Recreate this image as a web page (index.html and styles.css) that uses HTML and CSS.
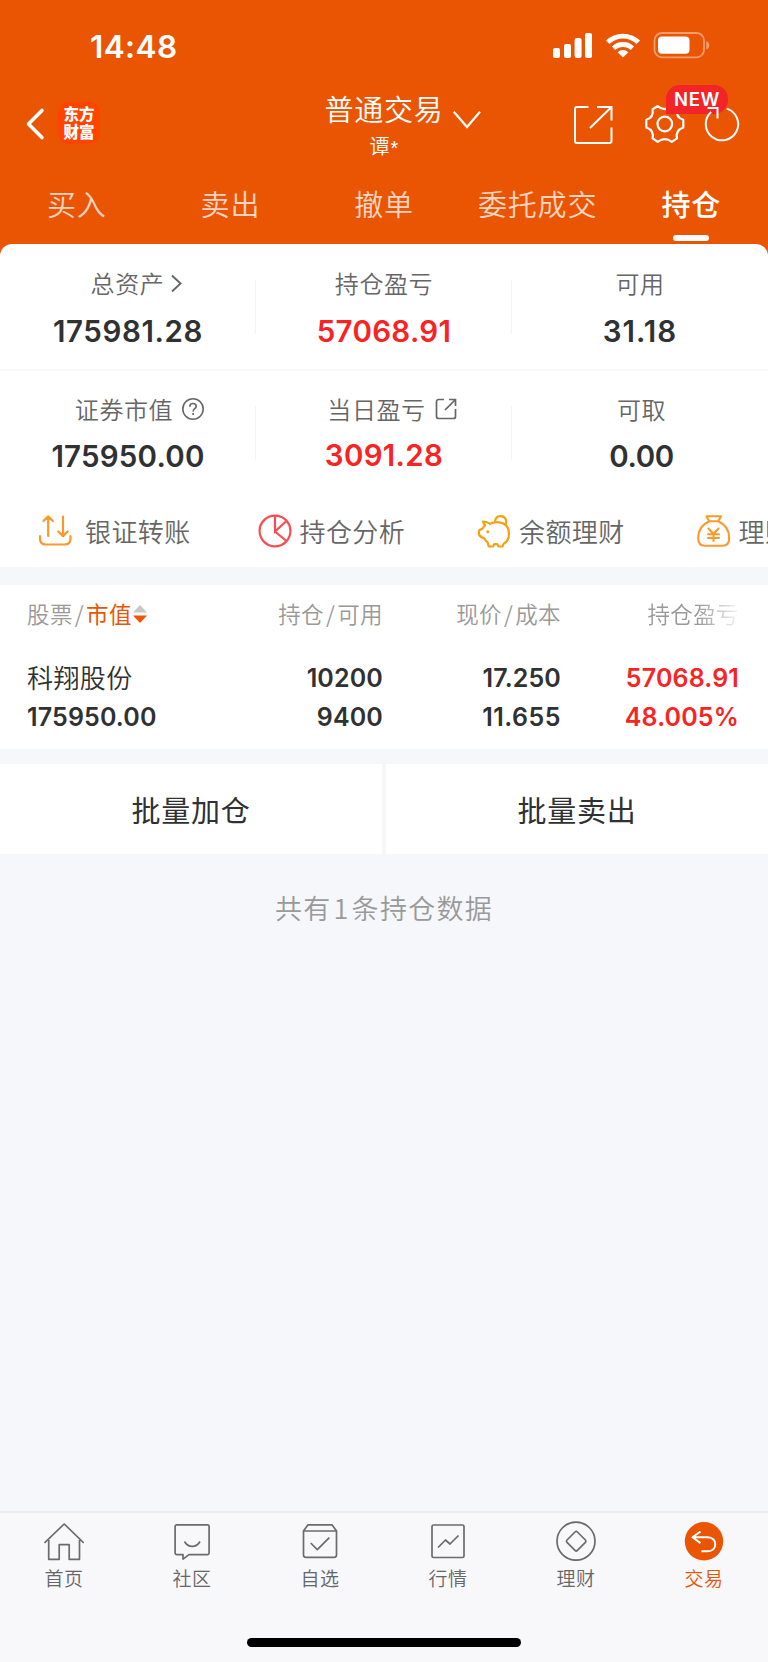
FILE: index.html
```html
<!DOCTYPE html>
<html lang="zh-CN">
<head>
<meta charset="utf-8">
<title>持仓</title>
<link rel="stylesheet" href="styles.css">
</head>
<body>
<div class="app">
  <header class="header">
    <div class="status">
      <span class="time">14:48</span>
      <svg class="status-icons" width="158" height="28" viewBox="552 32 158 28" fill="#fff">
        <rect x="553" y="48" width="7" height="10" rx="2"/><rect x="564" y="44" width="7" height="14" rx="2"/><rect x="574.6" y="38" width="7" height="20" rx="2"/><rect x="585" y="33" width="7" height="25" rx="2"/>
        <path d="M606 40.6a24.500 24.500 0 0 1 34 0l-3.400 3.500a19.600 19.600 0 0 0-27.200 0z"/>
        <path d="M611.900 46.600a16 16 0 0 1 22.200 0l-3.300 3.400a11.300 11.300 0 0 0-15.600 0z"/>
        <path d="M617.600 52.200a8 8 0 0 1 10.800 0l-5.400 5.400z"/>
        <rect x="654.500" y="33" width="49.500" height="24.300" rx="7.500" fill="none" stroke="#fff" stroke-opacity=".42" stroke-width="1.800"/>
        <rect x="658" y="36.600" width="31.500" height="17.200" rx="4"/>
        <path d="M706.300 41v8.500c1.900-.8 3-2.400 3-4.250s-1.100-3.450-3-4.250z" fill-opacity=".45"/>
      </svg>
    </div>
    <div class="nav">
      <div class="nav-left">
        <svg width="20" height="34" viewBox="25 107 20 34" fill="none" stroke="#fff" stroke-width="3.600" stroke-linecap="round" stroke-linejoin="round"><path d="M42 110.500 28.500 124 42 137.500"/></svg>
        <div class="logo">东方<br>财富</div>
      </div>
      <div class="account">
        <div class="account-name">普通交易</div>
        <div class="account-user">谭<span>*</span></div>
      </div>
      <svg class="account-arrow" width="30" height="20" viewBox="452 110 30 20" fill="none" stroke="#fff" stroke-width="2.200"><path d="M453.800 111.800 467 127l13-15.200"/></svg>
      <div class="actions">
        <svg width="40" height="40" viewBox="573 105 40 40" fill="none" stroke="#fff" stroke-width="2"><path d="M588.500 107H577a2 2 0 0 0-2 2v32a2 2 0 0 0 2 2h32.500a2 2 0 0 0 2-2v-13.500M597 107h14.500v13.500M611.500 107 590 128"/></svg>
        <div class="gear">
          <svg width="42" height="42" viewBox="644 103 42 42" fill="none" stroke="#fff" stroke-width="2.200" stroke-linejoin="round"><circle cx="664.800" cy="124" r="7.300"/><path d="M657.500 106.200Q664.800 112 672.100 106.200L677 109.300Q675.600 117.500 683.300 119.800L683.300 127.500Q675.200 130.500 677 138.300L671.800 141.800Q664.800 136.500 657.800 141.800L652.600 138.300Q654.400 130.500 646.300 127.500L646.300 119.800Q654 117.500 652.600 109.300Z"/></svg>
          <span class="badge">NEW</span>
        </div>
        <svg class="refresh" width="36" height="38" viewBox="703 105 36 38" fill="none" stroke="#fff" stroke-width="2"><path d="M725.700 108.600a16.200 16.200 0 1 1-15.600 3.500M706.500 108h10v10.500"/></svg>
      </div>
    </div>
    <nav class="tabs">
      <span>买入</span><span>卖出</span><span>撤单</span><span>委托成交</span><span class="on">持仓</span>
    </nav>
  </header>

  <main class="main">
    <section class="card">
      <div class="stats">
        <div class="stat">
          <div class="label shift-1">总资产<svg class="i-more" width="12" height="20" viewBox="170 274 12 20" fill="none" stroke="#666" stroke-width="1.900"><path d="M172 276.500l8.500 8-8.500 8"/></svg></div>
          <div class="value v1">175981.28</div>
        </div>
        <div class="stat"><div class="label">持仓盈亏</div><div class="value red v2">57068.91</div></div>
        <div class="stat"><div class="label">可用</div><div class="value v3">31.18</div></div>
      </div>
      <div class="stats second">
        <div class="stat">
          <div class="label shift-2">证券市值<svg class="i-help" width="24" height="24" viewBox="0 0 24 24" fill="none" stroke="#666" stroke-width="1.600"><circle cx="12" cy="12" r="10.200"/><path d="M8.800 9.700c0-2 1.300-3.200 3.200-3.200s3.200 1.200 3.200 2.900c0 2.200-3.100 2.500-3.100 5M12.100 16v2"/></svg></div>
          <div class="value v4">175950.00</div>
        </div>
        <div class="stat">
          <div class="label shift-3">当日盈亏<svg class="i-link" width="22" height="22" viewBox="0 0 22 22" fill="none" stroke="#666" stroke-width="1.700"><path d="M9 1.500H3.500a2 2 0 0 0-2 2v15a2 2 0 0 0 2 2h15a2 2 0 0 0 2-2V11M14 1.500h6.500V8M20.500 1.500 10 12"/></svg></div>
          <div class="value red v5">3091.28</div>
        </div>
        <div class="stat nudge"><div class="label">可取</div><div class="value v6">0.00</div></div>
      </div>
      <div class="links">
        <div class="link wide"><svg width="34" height="34" viewBox="38 514 34 34" fill="none" stroke="#f7992c" stroke-width="2.200" stroke-linecap="round" stroke-linejoin="round"><path d="M40 536v2.500q0 6 6 6h18.500q6 0 6-6V536M48.200 536v-19.500M43.500 521l4.700-4.600 4.700 4.600M63 516.500V536M58.300 531.500l4.700 4.600 4.700-4.600"/></svg>银证转账</div>
        <div class="link"><svg width="34" height="34" viewBox="257.500 514 34 34" fill="none" stroke="#fb4b52" stroke-width="2.200"><circle cx="274.500" cy="531" r="15.400"/><path d="M274.500 515.500v16l12-11M274.500 531.500l12 10"/></svg>持仓分析</div>
        <div class="link"><svg width="34" height="34" viewBox="477 514 34 34" fill="none" stroke="#f9a00f" stroke-width="2.200" stroke-linejoin="round"><path d="M483 521.500c3.400 0 5.500 1.200 7 2.400 3-1.900 6-1.900 9-1.500 7 .8 10 5 10 11 0 4.800-2 8.500-5.500 10.500l-1 2.600h-4l-1.200-2.300h-3l-1.200 2.300h-4.400l-1-4c-1.700-1.200-2.700-2.600-3.500-4.300-2.500-.6-4.500-2-5.200-3.700V530.500l3.500-2c.8-1.200 1.500-2.200 2.500-3zM495 521.500c.5-3.500 3-5.500 6-5.300 4.300.3 6.500 4.300 4.600 8.300"/><circle cx="487.800" cy="531.700" r="1.500" fill="#f9a00f" stroke="none"/></svg>余额理财</div>
        <div class="link"><svg width="34" height="34" viewBox="696.500 514 34 34" fill="none" stroke="#fa9a2d" stroke-width="2.100" stroke-linecap="round" stroke-linejoin="round"><path d="M706 516.200h14.500l-2.800 5q11 5 11 16.500 0 8-6.500 8h-18q-6.500 0-6.500-8 0-11.500 11-16.500zM708.700 521.200h9M708 528.500l5 5.500 5-5.500M713 534v7M707.500 534.300h11M707.500 538h11"/></svg>理财</div>
      </div>
    </section>

    <section class="holdings">
      <div class="row head">
        <span class="c1">股票<i>/</i><b>市值</b><svg width="14" height="20" viewBox="0 0 14 20"><path d="M0 8.500 7 1l7 7.500z" fill="#c8c8c8"/><path d="M0 11.500h14L7 19z" fill="#f05508"/></svg></span>
        <span class="c2">持仓<i>/</i>可用</span><span class="c3">现价<i>/</i>成本</span><span class="c4 fade">持仓盈亏</span>
      </div>
      <div class="row top"><span class="c1 name">科翔股份</span><span class="c2">10200</span><span class="c3">17.250</span><span class="c4 red">57068.91</span></div>
      <div class="row"><span class="c1">175950.00</span><span class="c2">9400</span><span class="c3 ones">11.655</span><span class="c4 red">48.005%</span></div>
    </section>

    <div class="batch"><button>批量加仓</button><button>批量卖出</button></div>
    <p class="summary">共有<i>1</i>条持仓数据</p>
  </main>

  <footer class="dock">
    <div class="dock-items">
      <div class="dock-item"><svg viewBox="44 1521 40 40"><path d="M44.500 1543 64.200 1524l19.600 19M48.700 1540v19.300h10.500v-14.600h10v14.600h10.300V1540"/></svg>首页</div>
      <div class="dock-item"><svg viewBox="172 1521 40 40"><path d="M176.500 1524.800h31a1.600 1.600 0 0 1 1.600 1.600v26.600a1.600 1.600 0 0 1-1.600 1.600H189l-6 4.500v-4.500h-6.300a1.600 1.600 0 0 1-1.600-1.600v-26.600a1.600 1.600 0 0 1 1.400-1.600zM184.500 1541.500c3.500 6.500 12 6.500 15.500 0"/></svg>社区</div>
      <div class="dock-item"><svg viewBox="300 1521 40 40"><path d="M303.500 1531l4.500-6.200h24l4.500 6.200v24a2.300 2.300 0 0 1-2.300 2.300h-28.400a2.300 2.300 0 0 1-2.300-2.300zM303.500 1531h33M310.700 1543l6.600 6.600 12-12"/></svg>自选</div>
      <div class="dock-item"><svg viewBox="428 1521 40 40"><rect x="432" y="1525" width="32" height="32.500" rx="1.500"/><path d="M438 1547.500l7.500-7.500 4.500 4 8.500-8.500"/></svg>行情</div>
      <div class="dock-item"><svg viewBox="556 1521 40 40"><circle cx="576" cy="1541.200" r="19"/><path d="M575 1532l-8 8q-1.200 1.200 0 2.400l8 8q1.200 1.200 2.400 0l8-8q1.200-1.200 0-2.400l-8-8q-1.200-1.200-2.400 0z"/></svg>理财</div>
      <div class="dock-item active"><svg viewBox="684 1521 40 40"><circle cx="704" cy="1541.300" r="19.200"/><path d="M700.500 1531.500l-8 5.800 8 5.800M693 1537.300h14.800c10 0 10 14 0 14h-6.500"/></svg>交易</div>
    </div>
    <div class="home-bar"></div>
  </footer>
</div>
</body>
</html>
```
FILE: styles.css
```css
* { box-sizing: border-box; }
body { margin: 0; background: #f6f7fa; font-family: "Noto Sans CJK SC", sans-serif; color: #303132; font-weight: 350; }
i { font-style: normal; }
svg { flex: none; display: block; }
.app { width: 768px; height: 1662px; display: flex; flex-direction: column; overflow: hidden; }

.header { height: 256px; background: #ea5504; color: #fff; }
.status { height: 88px; padding: 4px 58px 0 90px; display: flex; align-items: center; justify-content: space-between; }
.time { font: 600 31.500px/40px Inter, sans-serif; letter-spacing: 0.4px; padding-top: 1px; }
.nav { height: 78px; padding: 0 28px 0 25px; display: flex; }
.nav-left { width: 299px; display: flex; padding-top: 14px; gap: 13px; }
.nav-left > svg { margin-top: 5px; }
.logo { width: 42px; height: 42px; border-radius: 10px; background: #ff4300; font: 900 15.500px/18px "Noto Sans CJK SC", sans-serif; padding-top: 2px; text-align: center; }
.account { width: 120px; text-align: center; white-space: nowrap; }
.account-name { font-size: 29px; line-height: 36px; letter-spacing: 0.8px; padding-top: 2px; }
.account-user { display: flex; justify-content: center; font-size: 20px; line-height: 28px; padding-top: 6px; }
.account-user span { font: 400 20px/32px "Liberation Sans", sans-serif; margin-left: 1px; }
.account-arrow { margin: 22px 0 0 8px; }
.actions { display: flex; margin-left: auto; padding-top: 17px; }
.gear { position: relative; margin: -2px 18px 0 31px; }
.badge { position: absolute; left: 22px; top: -18px; width: 62px; height: 29px; border-radius: 14px 14px 14px 0; background: #f32427; font: 600 18.500px/29px Inter, sans-serif; text-align: center; letter-spacing: 0.6px; }
.refresh { position: relative; }
.tabs { display: grid; grid-template-columns: repeat(5, 1fr); text-align: center; font-size: 29px; line-height: 36px; letter-spacing: 0.8px; padding-top: 19px; color: #fbd5c2; }
.tabs .on { color: #fff; font-weight: 500; display: flex; flex-direction: column; align-items: center; }
.tabs .on::after { content: ""; width: 36px; height: 6px; border-radius: 3px; background: #fff; margin-top: 14px; }

.main { flex: 1; }
.card { background: #fff; border-radius: 12px 12px 0 0; margin-top: -12px; height: 323px; overflow: hidden; position: relative; }
.stats { display: grid; grid-template-columns: repeat(3, 1fr); height: 127px; border-bottom: 2px solid #f7f8f9; }
.stats.second { border: 0; height: 120px; }
.stat { padding-top: 20px; background: linear-gradient(#f3f4f6, #f3f4f6) no-repeat right 36px / 1px 54px; }
.second .stat { padding-top: 19px; background-position: right 35px; }
.stat:last-child { background: none; }
.label { display: flex; justify-content: center; align-items: center; font-size: 24px; line-height: 38px; height: 38px; letter-spacing: 0.6px; color: #666; }
.shift-1 { padding-left: 17px; }
.shift-2 { padding-left: 24px; }
.shift-3 { padding-left: 16px; }
.i-more { margin: 0 0 0 6px; }
.i-help { margin: 0 0 0 8px; }
.i-link { margin: 0 0 0 9px; }
.stat.nudge { padding-left: 3px; }
.value { font: 600 29.500px/36px Inter, sans-serif; text-align: center; margin-top: 11px; }
.second .value { margin-top: 10px; }
.v1 { letter-spacing: 0.6px; }
.v2 { letter-spacing: 0.3px; }
.v3 { letter-spacing: 1px; }
.v4 { letter-spacing: 0.2px; }
.second .v5 { letter-spacing: 0.3px; margin-top: 9px; }
.v6 { letter-spacing: -0.4px; }
.red { color: #f82423; }
.links { display: flex; padding: 23px 0 0 38px; }
.link { flex: none; width: 219.500px; display: flex; align-items: center; gap: 8px; font-size: 26px; line-height: 34px; letter-spacing: 0.4px; color: #666; white-space: nowrap; }
.wide { gap: 13px; }

.holdings { background: #fff; margin-top: 18px; height: 164px; padding: 9px 29px 0 27px; font: 600 25px/39px Inter, sans-serif; letter-spacing: 0.15px; }
.row { display: grid; grid-template-columns: 180px 176px 178px 178px; height: 39px; }
.row .c2, .row .c3, .row .c4 { text-align: right; }
.row .ones { letter-spacing: 0.5px; }
.head { font: 350 22.500px/38px "Noto Sans CJK SC", sans-serif; color: #999; height: 65px; letter-spacing: 0.4px; }
.head i { padding: 0 2px; }
.head b { color: #ea5504; font-weight: 400; }
.head .c1 { display: flex; }
.head svg { margin: 10px 0 0 1px; }
.head .fade { white-space: nowrap; -webkit-mask-image: linear-gradient(to right, #000 77%, transparent 102%); mask-image: linear-gradient(to right, #000 77%, transparent 102%); }
.name { font: 350 26px/35px "Noto Sans CJK SC", sans-serif; letter-spacing: 0.4px; }

.batch { margin-top: 15px; display: grid; grid-template-columns: 1fr 1fr; gap: 4px; height: 90px; }
.batch button { border: 0; background: #fff; padding: 0; font: 400 29px/36px "Noto Sans CJK SC", sans-serif; letter-spacing: 0.8px; color: #303132; }
.summary { margin: 35px 0 0; text-align: center; font-size: 27px; line-height: 38px; letter-spacing: 1.300px; color: #999; }
.summary i { padding: 0 2px; }

.dock { height: 151px; border-top: 2px solid #ebecee; background: #f8f8fb; }
.dock-items { display: grid; grid-template-columns: repeat(6, 1fr); }
.dock-item { display: flex; flex-direction: column; align-items: center; padding-top: 8px; font-size: 19px; line-height: 34px; letter-spacing: 0.6px; color: #666; }
.dock-item svg { width: 40px; height: 40px; fill: none; stroke: #6b6b6b; stroke-width: 1.700; stroke-linejoin: round; }
.dock-item.active { color: #ea5504; }
.active circle { fill: #ea5504; stroke: none; }
.active path { stroke: #fff; stroke-width: 2; }
.home-bar { width: 274px; height: 9px; border-radius: 5px; background: #000; margin: 43px auto 0; }
```
